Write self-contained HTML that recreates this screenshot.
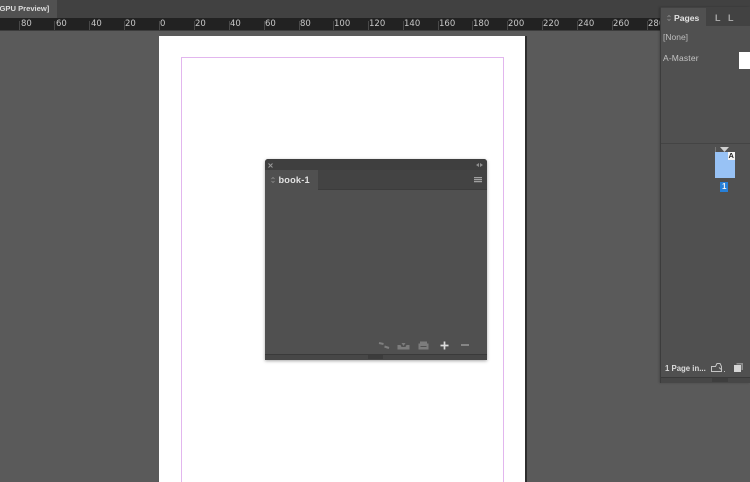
<!DOCTYPE html>
<html>
<head>
<meta charset="utf-8">
<style>
html,body{margin:0;padding:0;width:750px;height:482px;overflow:hidden}
body{position:relative;background:#5a5a5a;font-family:"Liberation Sans",sans-serif}
div,span{position:absolute;box-sizing:border-box}
.t{white-space:nowrap;color:#d8d8d8;filter:blur(.3px)}
.r{font-size:8.500px;top:19px;line-height:10px;color:#c8c8c8;white-space:nowrap;font-family:"DejaVu Sans","Liberation Sans",sans-serif;filter:blur(.3px)}
.k{top:21px;width:1px;height:9px;background:#484848}
svg{position:absolute;overflow:visible;filter:blur(.3px)}
</style>
</head>
<body>
<div style="left:0;top:0;width:750px;height:18px;background:#414141"></div>
<div style="left:0;top:0;width:57px;height:18px;background:#515151"></div>
<div class="t" style="left:-3px;top:3px;font-size:7.600px;font-weight:bold;line-height:11px;color:#dcdcdc">[GPU Preview]</div>

<div style="left:0;top:18px;width:750px;height:12px;background:#222"></div>
<div style="left:0;top:30px;width:750px;height:1px;background:#3c3c3c"></div>

<div class="k" style="left:19px"></div><div class="r" style="left:21px">80</div>
<div class="k" style="left:54px"></div><div class="r" style="left:56px">60</div>
<div class="k" style="left:89px"></div><div class="r" style="left:91px">40</div>
<div class="k" style="left:124px"></div><div class="r" style="left:125px">20</div>
<div class="k" style="left:159px"></div><div class="r" style="left:160px">0</div>
<div class="k" style="left:194px"></div><div class="r" style="left:195px">20</div>
<div class="k" style="left:229px"></div><div class="r" style="left:230px">40</div>
<div class="k" style="left:264px"></div><div class="r" style="left:265px">60</div>
<div class="k" style="left:299px"></div><div class="r" style="left:300px">80</div>
<div class="k" style="left:333px"></div><div class="r" style="left:334px">100</div>
<div class="k" style="left:368px"></div><div class="r" style="left:369px">120</div>
<div class="k" style="left:403px"></div><div class="r" style="left:404px">140</div>
<div class="k" style="left:438px"></div><div class="r" style="left:439px">160</div>
<div class="k" style="left:472px"></div><div class="r" style="left:473px">180</div>
<div class="k" style="left:507px"></div><div class="r" style="left:508px">200</div>
<div class="k" style="left:542px"></div><div class="r" style="left:543px">220</div>
<div class="k" style="left:577px"></div><div class="r" style="left:578px">240</div>
<div class="k" style="left:612px"></div><div class="r" style="left:613px">260</div>
<div class="k" style="left:647px"></div><div class="r" style="left:648px">280</div>

<div style="left:159px;top:36px;width:368px;height:446px;background:#fff;border-right:2px solid #2e2e2e"></div>
<div style="left:181px;top:57px;width:1px;height:425px;background:#e2b6ee"></div>
<div style="left:503px;top:57px;width:1px;height:425px;background:#e2b6ee"></div>
<div style="left:181px;top:57px;width:323px;height:1px;background:#e2b6ee"></div>

<div style="left:265px;top:159px;width:222px;height:201px;background:#505050;border-radius:3px 3px 0 0;box-shadow:0 1px 3px rgba(0,0,0,.35)"></div>
<div style="left:265px;top:159px;width:222px;height:11px;background:#3f3f3f;border-radius:3px 3px 0 0"></div>
<div style="left:265px;top:170px;width:222px;height:20px;background:#434343;border-bottom:1px solid #3c3c3c"></div>
<div style="left:265px;top:170px;width:53px;height:20px;background:#505050"></div>
<svg style="left:268px;top:163px" width="5" height="5"><path d="M.5 .5l4 4M4.500 .5l-4 4" stroke="#9a9a9a" stroke-width="1" fill="none"/></svg>
<svg style="left:476px;top:163px" width="7" height="4"><path d="M3 0v4L0 2zM4 0v4l3-2z" fill="#8f8f8f"/></svg>
<svg style="left:271px;top:177px" width="4" height="6"><path d="M.5 2 2 .5 3.500 2M.5 4 2 5.500 3.500 4" fill="none" stroke="#8d8d8d" stroke-width=".8"/></svg>
<div class="t" style="left:278.500px;top:174px;font-size:9.200px;font-weight:bold;line-height:12px;color:#e2e2e2;letter-spacing:.2px">book-1</div>
<div style="left:474px;top:177px;width:8px;height:6px;background:repeating-linear-gradient(#a0a0a0 0 1px,#5a5a5a 1px 2px)"></div>

<svg style="left:378px;top:341px" width="12" height="9"><path d="M1 2l4.500 1M6.500 5.500 11 7" stroke="#7f7f7f" stroke-width="2" fill="none"/></svg>
<svg style="left:397px;top:340px" width="13" height="10"><path d="M6.500 0v4M4.500 3h4L6.500 6zM.5 5h3l1 2h4l1-2h3v4.500H.5z" fill="#7c7c7c"/></svg>
<svg style="left:418px;top:341px" width="11" height="9"><path d="M2 .5h7v2h1.500v6H.5v-6H2z M2.500 5h6v1h-6z" fill="#7c7c7c" fill-rule="evenodd"/></svg>
<svg style="left:440px;top:341px" width="9" height="9"><path d="M4.500 .5v8M.5 4.500h8" stroke="#dcdcdc" stroke-width="1.700"/></svg>
<div style="left:461px;top:344px;width:8px;height:2px;background:#858585"></div>

<div style="left:265px;top:354px;width:222px;height:1px;background:#3a3a3a"></div>
<div style="left:265px;top:355px;width:222px;height:5px;background:#474747"></div>
<div style="left:368px;top:355px;width:15px;height:4px;background:#3c3c3c"></div>

<div style="left:660px;top:7px;width:90px;height:376px;background:#505050;border-left:1px solid #3c3c3c;box-shadow:-1px 0 2px rgba(0,0,0,.2)"></div>
<div style="left:661px;top:7px;width:89px;height:19px;background:#424242"></div>
<div style="left:661px;top:8px;width:45px;height:18px;background:#505050"></div>
<svg style="left:667px;top:15px" width="4" height="6"><path d="M.5 2 2 .5 3.500 2M.5 4 2 5.500 3.500 4" fill="none" stroke="#8d8d8d" stroke-width=".8"/></svg>
<div class="t" style="left:674px;top:12px;font-size:8.600px;font-weight:bold;line-height:12px;color:#e2e2e2">Pages</div>
<div class="t" style="left:715px;top:12px;font-size:9px;font-weight:bold;line-height:12px;color:#a8a8a8">L</div>
<div class="t" style="left:728px;top:12px;font-size:9px;font-weight:bold;line-height:12px;color:#a8a8a8">L</div>
<div class="t" style="left:663px;top:31px;font-size:8.500px;line-height:12px;color:#bdbdbd">[None]</div>
<div class="t" style="left:663px;top:52px;font-size:8.500px;line-height:12px;color:#c4c4c4;letter-spacing:.15px">A-Master</div>
<div style="left:739px;top:52px;width:11px;height:17px;background:#fff"></div>

<div style="left:661px;top:143px;width:89px;height:1px;background:#444"></div>
<div style="left:715px;top:152px;width:20px;height:26px;background:#98c2f5"></div>
<div style="left:715px;top:147px;width:1px;height:5px;background:#777"></div>
<svg style="left:720px;top:147px" width="9" height="5"><path d="M0 0h9L4.500 5z" fill="#cfcfcf"/></svg>
<div style="left:728px;top:152px;width:7px;height:8px;background:#f4f4f4"></div>
<div class="t" style="left:728.500px;top:151px;font-size:7.500px;font-weight:bold;line-height:10px;color:#222">A</div>
<div style="left:720px;top:182px;width:8px;height:10px;background:#2780d8"></div>
<div class="t" style="left:722px;top:182px;font-size:8px;font-weight:bold;line-height:10px;color:#f0f0f0">1</div>

<div class="t" style="left:665px;top:363px;font-size:7.800px;font-weight:bold;line-height:11px;color:#dcdcdc">1 Page in...</div>
<svg style="left:711px;top:363px" width="15" height="10"><path d="M.5 3.500h4l1.500-3h3l1.500 3v5H.5zM8 4.500l3 2.500" fill="none" stroke="#c4c4c4" stroke-width="1"/><path d="M13 8h1v1h-1z" fill="#bbb"/></svg>
<svg style="left:734px;top:363px" width="9" height="9"><path d="M2.500 0H9v7H7.500V1.500h-5z" fill="#8e8e8e"/><path d="M0 2h7v7H0z" fill="#d6d6d6"/></svg>
<div style="left:661px;top:377px;width:89px;height:1px;background:#3a3a3a"></div>
<div style="left:661px;top:378px;width:89px;height:5px;background:#474747"></div>
<div style="left:712px;top:378px;width:16px;height:4px;background:#3e3e3e"></div>
</body>
</html>
